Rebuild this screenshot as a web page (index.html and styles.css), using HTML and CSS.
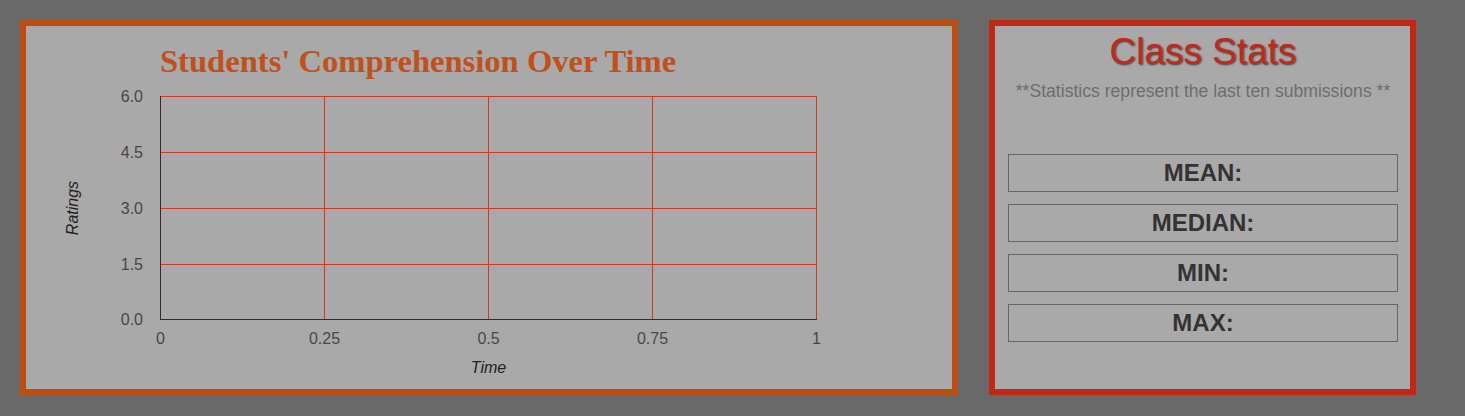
FILE: index.html
```html
<!DOCTYPE html>
<html lang="en">
<head>
<meta charset="utf-8">
<title>Class Dashboard</title>
<link rel="stylesheet" href="styles.css">
</head>
<body>
<main class="page">
  <section class="chart-panel">
    <svg class="chart" viewBox="26 26 926 363" width="926" height="363" xmlns="http://www.w3.org/2000/svg">
      <text class="chart-title" x="160" y="71.5">Students' Comprehension Over Time</text>
      <g class="grid">
        <line x1="160" y1="96.5" x2="817" y2="96.5"/>
        <line x1="160" y1="152.5" x2="817" y2="152.5"/>
        <line x1="160" y1="208.5" x2="817" y2="208.5"/>
        <line x1="160" y1="264.5" x2="817" y2="264.5"/>
        <line x1="324.5" y1="96" x2="324.5" y2="320"/>
        <line x1="488.5" y1="96" x2="488.5" y2="320"/>
        <line x1="652.5" y1="96" x2="652.5" y2="320"/>
        <line x1="816.5" y1="96" x2="816.5" y2="320"/>
      </g>
      <g class="axis">
        <line x1="160.5" y1="96" x2="160.5" y2="320"/>
        <line x1="160" y1="319.5" x2="817" y2="319.5"/>
      </g>
      <g class="tick y-tick">
        <text x="143" y="102">6.0</text>
        <text x="143" y="158">4.5</text>
        <text x="143" y="214">3.0</text>
        <text x="143" y="270">1.5</text>
        <text x="143" y="325">0.0</text>
      </g>
      <g class="tick x-tick">
        <text x="160.5" y="344">0</text>
        <text x="324.5" y="344">0.25</text>
        <text x="488.5" y="344">0.5</text>
        <text x="652.5" y="344">0.75</text>
        <text x="816.5" y="344">1</text>
      </g>
      <text class="axis-title" x="488.5" y="373">Time</text>
      <text class="axis-title" x="78" y="208" transform="rotate(-90 78 208)">Ratings</text>
    </svg>
  </section>
  <section class="stats-panel">
    <h1 class="stats-title">Class Stats</h1>
    <p class="stats-note">**Statistics represent the last ten submissions **</p>
    <ul class="stat-list">
      <li class="stat">MEAN:</li>
      <li class="stat">MEDIAN:</li>
      <li class="stat">MIN:</li>
      <li class="stat">MAX:</li>
    </ul>
  </section>
</main>
</body>
</html>
```
FILE: styles.css
```css
html, body {
  margin: 0;
  padding: 0;
  background: #696969;
}

body {
  font-family: "Liberation Sans", Arial, sans-serif;
  width: 1465px;
  height: 416px;
  overflow: hidden;
}

.page {
  display: flex;
  align-items: flex-start;
  gap: 31px;
  padding: 20px 0 0 20px;
}

.chart-panel {
  box-sizing: border-box;
  width: 938px;
  height: 375px;
  border: 6px solid #bc4c14;
  background: #a9a9a9;
}

.chart {
  display: block;
}

.chart-title {
  font-family: "Liberation Serif", "Times New Roman", serif;
  font-weight: bold;
  font-size: 32.6px;
  fill: #c0501c;
}

.grid line {
  stroke: #cc3a26;
  stroke-width: 1;
}

.axis line {
  stroke: #352b2b;
  stroke-width: 1;
}

.tick text {
  font-family: "Liberation Sans", Arial, sans-serif;
  font-size: 16px;
  fill: #474747;
}

.y-tick text {
  text-anchor: end;
}

.x-tick text {
  text-anchor: middle;
}

.axis-title {
  font-family: "Liberation Sans", Arial, sans-serif;
  font-style: italic;
  font-size: 16px;
  fill: #222;
  text-anchor: middle;
}

.stats-panel {
  box-sizing: border-box;
  width: 427px;
  height: 375px;
  border: 6px solid #bf2811;
  background: #a9a9a9;
  padding: 4px 12px 0 13px;
}

.stats-title {
  margin: 0;
  font-size: 37px;
  line-height: 44px;
  font-weight: normal;
  text-align: center;
  color: #c3291a;
  text-shadow: 1px 1px 2px #3a3a3a;
}

.stats-note {
  margin: 7px 0 0;
  font-size: 17.6px;
  line-height: 20px;
  text-align: center;
  color: #6e6e6e;
}

.stat-list {
  list-style: none;
  margin: 53px 0 0;
  padding: 0;
  display: flex;
  flex-direction: column;
  gap: 12px;
}

.stat {
  box-sizing: border-box;
  width: 390px;
  height: 38px;
  border: 1px solid #666;
  font-size: 24px;
  font-weight: bold;
  line-height: 36px;
  text-align: center;
  color: #333;
}
```
